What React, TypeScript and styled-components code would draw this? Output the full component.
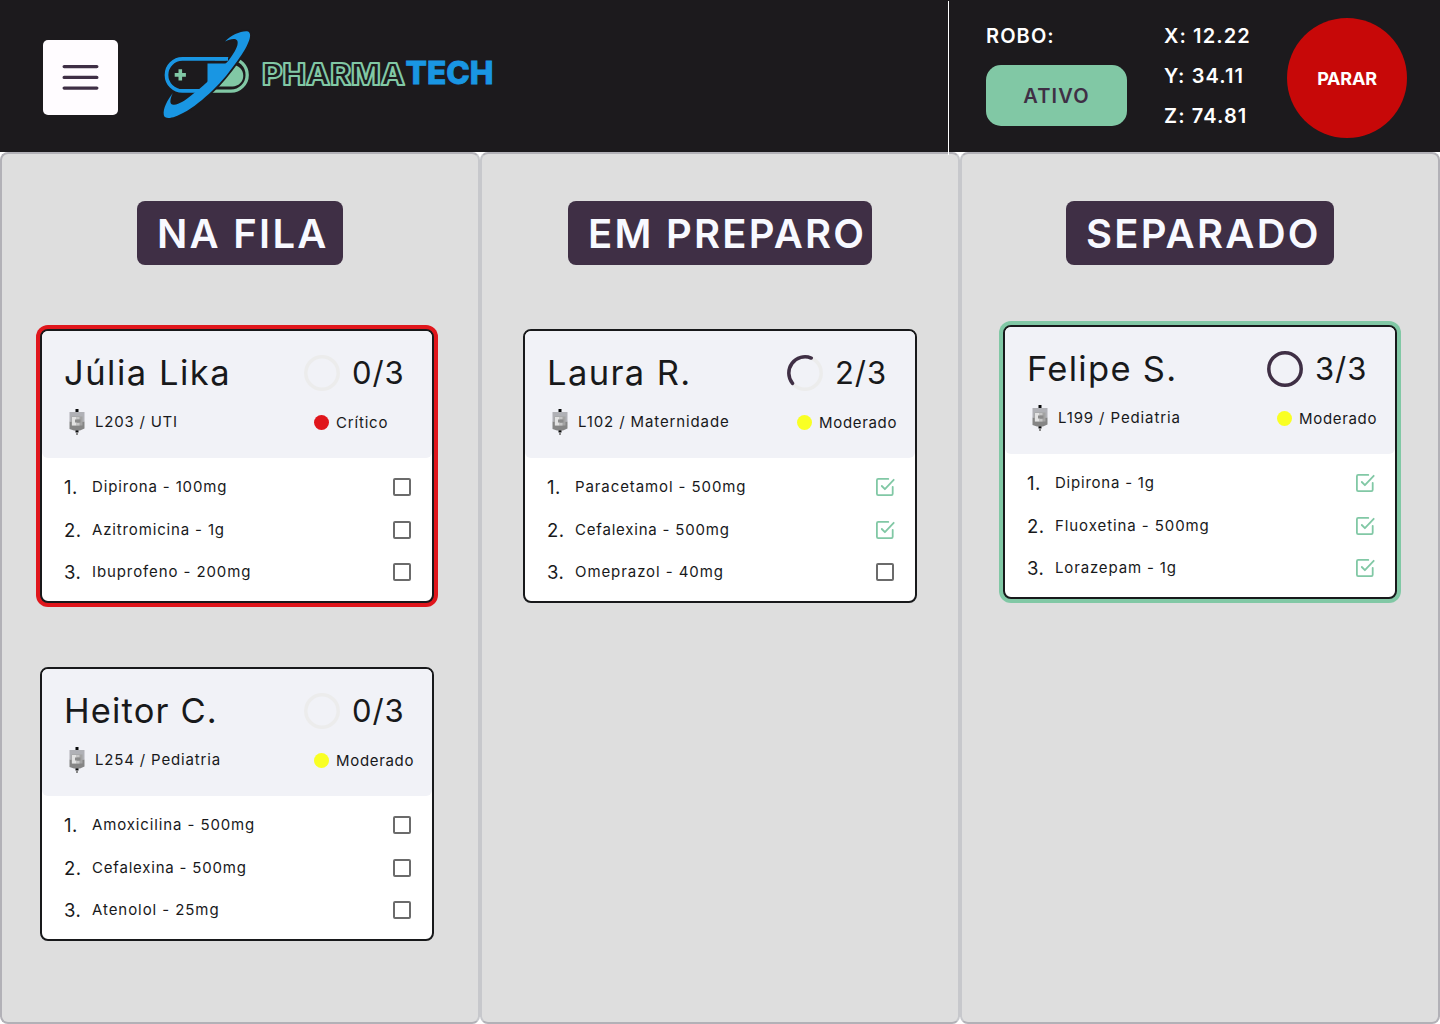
import React from 'react';
import styled, { createGlobalStyle } from 'styled-components';

const ink = '#1c1a1d';
const plum = '#3f2f45';
const mint = '#81c8a5';
const blue = '#1996e3';
const red = '#e0161c';
const yellow = '#f9ff24';
const edge = '#b2b1b7';
const divider = '#c7c8cc';

const GlobalStyle = createGlobalStyle`
  * { box-sizing: border-box; }
  body { margin: 0; background: #fff; font-family: Inter, 'Open Sans', sans-serif; color: #18191b; }
  ul, ol { list-style: none; margin: 0; padding: 0; }
  h1, h2, h3, p { margin: 0; font-weight: 400; }
`;

const Page = styled.div`
  width: 1440px;
  height: 1024px;
  display: flex;
  flex-direction: column;
  overflow: hidden;
`;

const Header = styled.header`
  height: 152px;
  flex: none;
  display: flex;
  background: ${ink};
  color: #fff;
`;

const Brand = styled.div`
  flex: 1;
  display: flex;
  align-items: flex-start;
  padding-left: 43px;
`;

const MenuButton = styled.button`
  width: 75px;
  height: 75px;
  margin: 40px 42px 0 0;
  padding: 0;
  border: 0;
  border-radius: 5px;
  background: #fffcff;
  display: grid;
  place-items: center;
`;

const Logo = styled.svg`
  display: block;
  margin-top: 24px;
`;

const RobotPanel = styled.section`
  width: 492px;
  height: 154px;
  margin-top: 1px;
  border-left: 1px solid #fff;
  padding-left: 37px;
  display: flex;
  align-items: flex-start;
  position: relative;
  z-index: 1;
`;

const Readout = styled.p`
  font-size: 20px;
  line-height: 40px;
  font-weight: 600;
  letter-spacing: 1.1px;
`;

const RobotState = styled.div`
  width: 141px;
  margin: 15px 37px 0 0;
`;

const StateBadge = styled.div`
  height: 61px;
  margin-top: 9px;
  border-radius: 15px;
  background: ${mint};
  color: ${plum};
  font-size: 20px;
  font-weight: 600;
  letter-spacing: 1.2px;
  display: grid;
  place-items: center;
`;

const Coordinates = styled.div`
  width: 123px;
  margin-top: 15px;
`;

const StopButton = styled.button`
  width: 120px;
  height: 120px;
  margin-top: 17px;
  padding: 0;
  border: 0;
  border-radius: 50%;
  background: #c70808;
  color: #fff;
  font: 700 18px Inter, sans-serif;
  letter-spacing: -0.2px;
`;

const Board = styled.main`
  flex: 1;
  display: grid;
  grid-template-columns: repeat(3, 480px);
`;

const Column = styled.section`
  height: 872px;
  border: 2px solid;
  border-color: ${edge} ${divider};
  border-radius: 8px;
  background: #dedede;
  display: flex;
  flex-direction: column;
  align-items: center;
  padding-top: 47px;

  &:first-child { border-left-color: ${edge}; }
  &:last-child { border-right-color: ${edge}; }
`;

const ColumnTitle = styled.h1`
  width: ${(p: { $width: number }) => p.$width}px;
  height: 64px;
  padding-left: 20px;
  border-radius: 8px;
  background: ${plum};
  color: #f8f9ff;
  font-size: 40px;
  line-height: 66px;
  font-weight: 600;
  letter-spacing: 2.25px;
  white-space: nowrap;
`;

const Cards = styled.div`
  width: 394px;
  margin-top: ${(p: { $top: number }) => p.$top}px;
  margin-right: ${(p: { $shift: number }) => p.$shift}px;
  display: flex;
  flex-direction: column;
  gap: 64px;
`;

const CardBox = styled.article`
  height: 274px;
  border: 2px solid #18191b;
  border-radius: 8px;
  background: #fff;
  box-shadow: ${(p: { $ring?: string }) => (p.$ring ? `0 0 0 4px ${p.$ring}` : 'none')};
`;

const CardHead = styled.div`
  height: 127px;
  border-radius: 6px;
  background: #f1f2f7;
  padding: 17px 0 0 22px;
`;

const HeadRow = styled.div`
  display: grid;
  grid-template-columns: 240px 1fr;
  height: ${(p: { $height: number }) => p.$height}px;
  align-items: center;
  white-space: nowrap;
`;

const Patient = styled.h2`
  font-size: 34.5px;
  line-height: 50px;
  letter-spacing: ${(p: { $tracking: number }) => p.$tracking}px;
`;

const Progress = styled.div`
  display: flex;
  align-items: center;
  gap: 12px;
  font-size: 31px;
  letter-spacing: 0.9px;
`;

const Count = styled.span`
  padding-bottom: 1px;
`;

const Place = styled.p`
  display: flex;
  align-items: center;
  gap: 10px;
  padding: 0 0 1px 5px;
  font-size: 15px;
  letter-spacing: ${(p: { $tracking: number }) => p.$tracking}px;
`;

const Severity = styled.p`
  display: flex;
  align-items: center;
  gap: 7px;
  padding-left: 10px;
  font-size: 15px;
  letter-spacing: ${(p: { $tracking: number }) => p.$tracking}px;
`;

const Dot = styled.span`
  width: 15px;
  height: 15px;
  border-radius: 50%;
  background: ${(p: { $color: string }) => p.$color};
`;

const Medicines = styled.ol`
  padding: 8px 20px 0 22px;
`;

const Medicine = styled.li`
  height: 42.6px;
  display: grid;
  grid-template-columns: 28px 1fr 20px;
  align-items: center;
  font-size: 15px;
  white-space: nowrap;
`;

const MedicineName = styled.span`
  padding-bottom: 1.2px;
  letter-spacing: ${(p: { $tracking: number }) => p.$tracking}px;
`;

const Order = styled.span`
  font-size: 18.5px;
  letter-spacing: 0.5px;
`;

const Bag = () => (
  <svg width="16" height="26" viewBox="0 0 16 26">
    <path d="M6.500 0h3v3.500h-3zM6.500 20.500h3v3h-3z" fill="#08090a" />
    <path d="M7 23.500h2v2.500h-2z" fill="#8a8a8a" />
    <path d="M.5 3h15v9.500H.5z" fill="#b0b1b6" />
    <path d="M.5 12.500h15v7L11 21.500H5L.5 20z" fill="#858585" />
    <path d="M2.500 7.500h11v9h-11z" fill="#a3a3a3" />
    <path d="M3 8h4.500v8.500H3z" fill="#e2e2e2" />
    <path d="M7.500 8h3v2.500h-3zM7.500 14h3v2.500h-3z" fill="#c6c6c6" />
    <path d="M6 10.500h5.500v3H6z" fill="#8b8b8b" />
  </svg>
);

const Ring = ({ done }: { done: number }) => (
  <svg width="36" height="36" viewBox="0 0 36 36" fill="none" strokeWidth="3.500">
    <circle cx="18" cy="18" r="16.200" stroke="#ececec" />
    {done === 2 && (
      <path d="M24.200 3.050A16.200 16.200 0 0 0 5.500 28.300" stroke={plum} strokeLinecap="round" />
    )}
    {done === 3 && <circle cx="18" cy="18" r="16.200" stroke={plum} />}
  </svg>
);

const Check = ({ on }: { on: boolean }) =>
  on ? (
    <svg width="20" height="20" viewBox="0 0 20 20" fill="none" stroke={mint} strokeWidth="1.800" strokeLinecap="round" strokeLinejoin="round">
      <path d="M13.300 1.900H3.200Q1.900 1.900 1.900 3.200V16.800Q1.900 18.100 3.200 18.100H16.400Q17.700 18.100 17.700 16.800V9.800" />
      <path d="M6.800 9L9.900 12.200L18.700 2.800" />
    </svg>
  ) : (
    <svg width="20" height="20" viewBox="0 0 20 20" fill="none">
      <rect x="2" y="2" width="16" height="16" rx="1" stroke="#6b6b6b" strokeWidth="2" />
    </svg>
  );

const orbit =
  'M224.500 41C231 34.500 241 30 247.500 31C253 33.500 247 46.500 237.500 59.500C230 70 222 80.500 212 90C203 98.500 193 107 183 112.300C174 117.300 164.500 120 163.300 114.500C162.300 108 167 99.500 172.300 92.500C168.800 100 169 104.600 173.500 104.300C179 103.800 185 99.500 190 95.500C196 91 201 87 206.700 81.700L226.700 61.700C231 56.500 235.500 49.500 236.800 45C238 40.500 236.500 38.600 233.500 38.500C230.500 38.400 227.500 39.500 224.500 41Z';

const BrandLogo = () => (
  <Logo width="340" height="100" viewBox="160 24 340 100" role="img" aria-label="Pharma Tech">
    <g transform="translate(0 0.4)">
      <path d="M205 90.700H231A16.200 16.200 0 0 0 231 58.300H215" fill="none" stroke={mint} strokeWidth="3.300" />
      <path d="M226 64.500H232.500A10.700 10.700 0 0 1 232.500 86H212Z" fill={mint} />
      <path d={orbit} transform="translate(0.5 0)" fill={ink} stroke={ink} strokeWidth="4" />
      <path d="M228 58.500H182.500A16 16 0 0 0 182.500 90.500H201" fill="none" stroke={blue} strokeWidth="3.700" />
      <path d="M207.500 63H227L216 78L207.500 85Z" fill={blue} />
      <path d={orbit} transform="translate(0.5 0)" fill={blue} />
      <path d="M180.300 68.900V80.100M174.700 74.500H185.900" stroke={mint} strokeWidth="3.600" />
    </g>
    <text x="262" y="84.600" textLength="143" lengthAdjust="spacingAndGlyphs" fontFamily="Inter" fontWeight="800" fontSize="30.500" fill={ink} stroke={mint} strokeWidth="2.100" strokeLinejoin="round">PHARMA</text>
    <text x="405.500" y="84" textLength="88" lengthAdjust="spacingAndGlyphs" fontFamily="Inter" fontWeight="800" fontSize="31" fill={blue} stroke={blue} strokeWidth="0.800">TECH</text>
  </Logo>
);

type Med = [name: string, tracking: number, checked: boolean];
interface CardData {
  name: string;
  nameTracking: number;
  place: string;
  placeTracking: number;
  critical?: boolean;
  ring?: string;
  meds: Med[];
}

const queue: CardData[] = [
  {
    name: 'Júlia Lika', nameTracking: 1.5, place: 'L203 / UTI', placeTracking: 0.78, critical: true, ring: red,
    meds: [['Dipirona - 100mg', 0.85, false], ['Azitromicina - 1g', 0.85, false], ['Ibuprofeno - 200mg', 0.9, false]],
  },
  {
    name: 'Heitor C.', nameTracking: 1.15, place: 'L254 / Pediatria', placeTracking: 0.83,
    meds: [['Amoxicilina - 500mg', 0.88, false], ['Cefalexina - 500mg', 0.8, false], ['Atenolol - 25mg', 0.93, false]],
  },
];
const preparing: CardData[] = [
  {
    name: 'Laura R.', nameTracking: 1.4, place: 'L102 / Maternidade', placeTracking: 0.88,
    meds: [['Paracetamol - 500mg', 0.9, true], ['Cefalexina - 500mg', 0.8, true], ['Omeprazol - 40mg', 0.92, false]],
  },
];
const ready: CardData[] = [
  {
    name: 'Felipe S.', nameTracking: 1.3, place: 'L199 / Pediatria', placeTracking: 0.88, ring: mint,
    meds: [['Dipirona - 1g', 0.78, true], ['Fluoxetina - 500mg', 0.92, true], ['Lorazepam - 1g', 0.85, true]],
  },
];

const Card = ({ card }: { card: CardData }) => {
  const done = card.meds.filter((m) => m[2]).length;
  return (
    <CardBox $ring={card.ring}>
      <CardHead>
        <HeadRow $height={50}>
          <Patient $tracking={card.nameTracking}>{card.name}</Patient>
          <Progress>
            <Ring done={done} />
            <Count>{done}/3</Count>
          </Progress>
        </HeadRow>
        <HeadRow $height={48}>
          <Place $tracking={card.placeTracking}>
            <Bag />
            {card.place}
          </Place>
          <Severity $tracking={card.critical ? 0.82 : 0.68}>
            <Dot $color={card.critical ? red : yellow} />
            {card.critical ? 'Crítico' : 'Moderado'}
          </Severity>
        </HeadRow>
      </CardHead>
      <Medicines>
        {card.meds.map(([name, tracking, checked], i) => (
          <Medicine key={name}>
            <Order>{i + 1}.</Order>
            <MedicineName $tracking={tracking}>{name}</MedicineName>
            <Check on={checked} />
          </Medicine>
        ))}
      </Medicines>
    </CardBox>
  );
};

const columns = [
  { title: 'NA FILA', width: 206, top: 64, shift: 6, cards: queue },
  { title: 'EM PREPARO', width: 304, top: 64, shift: 0, cards: preparing },
  { title: 'SEPARADO', width: 268, top: 60, shift: 0, cards: ready },
];

const App = () => (
  <Page>
    <GlobalStyle />
    <Header>
      <Brand>
        <MenuButton aria-label="Menu">
          <svg width="37" height="27" viewBox="0 0 37 27" stroke={plum} strokeWidth="3.400" strokeLinecap="round">
            <path d="M2.200 2.600H34.800M2.200 13.400H34.800M2.200 24.100H34.800" />
          </svg>
        </MenuButton>
        <BrandLogo />
      </Brand>
      <RobotPanel>
        <RobotState>
          <Readout>ROBO:</Readout>
          <StateBadge>ATIVO</StateBadge>
        </RobotState>
        <Coordinates>
          <Readout>X: 12.22</Readout>
          <Readout>Y: 34.11</Readout>
          <Readout>Z: 74.81</Readout>
        </Coordinates>
        <StopButton>PARAR</StopButton>
      </RobotPanel>
    </Header>
    <Board>
      {columns.map((c) => (
        <Column key={c.title}>
          <ColumnTitle $width={c.width}>{c.title}</ColumnTitle>
          <Cards $top={c.top} $shift={c.shift}>
            {c.cards.map((card) => (
              <Card key={card.name} card={card} />
            ))}
          </Cards>
        </Column>
      ))}
    </Board>
  </Page>
);

export default App;
